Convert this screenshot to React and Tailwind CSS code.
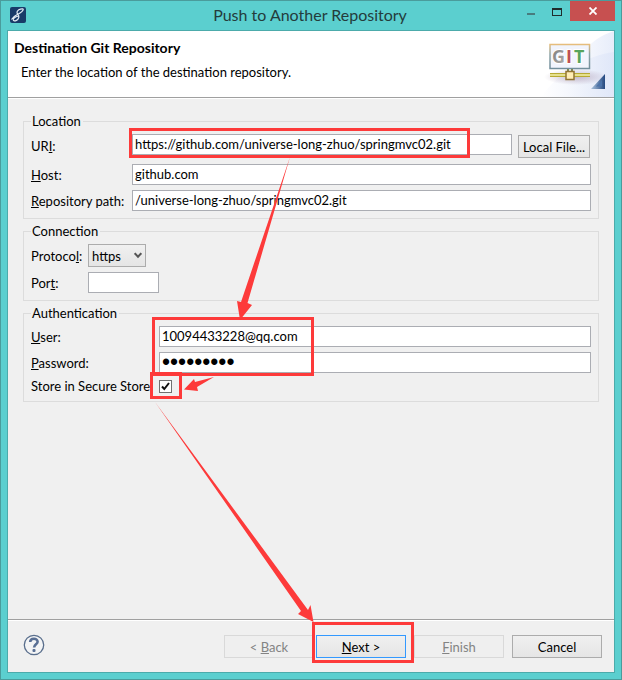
import React from "react";

const fieldBase =
  "h-[21px] min-w-0 rounded-none border border-[#abadb3] bg-white px-[2px] pb-px text-black outline-none";
const field = fieldBase + " text-[13px] leading-4";
const button =
  "h-[23px] shrink-0 whitespace-nowrap border text-center text-[13px] leading-4";
const raised = "border-[#acacac] bg-linear-to-b from-[#f0f0f0] to-[#e5e5e5]";

function Group({ title, children }) {
  return (
    <fieldset className="min-w-0 border border-[#dcdcdc] px-[7px] pt-[5px] pb-[7px]">
      <legend className="h-4 pr-[2px] pl-px text-[13px] leading-4">{title}</legend>
      {children}
    </fieldset>
  );
}

function Dialog() {
  return (
    <div className="flex min-h-screen flex-col border border-[#4a9c9c] bg-[#5bcfcf] px-[6px] pb-[6px]">
      <header className="-mr-[6px] flex h-[29px] items-start">
        <svg className="mt-[6px] ml-[3px] shrink-0" width="16" height="16" viewBox="0 0 16 16" aria-hidden="true">
          <rect width="16" height="16" rx="2" fill="#183a68" />
          <path d="M1.500 12.500C3.500 8.500 7 8 10 6C13 4 14 2 12.500 1.800C10.500 1.600 6.500 3.500 7 5.800C7.400 7.500 9.500 8 8.800 10.500C8 13.500 4 15 3.300 13C2.800 11 6 9.500 9 9" fill="none" stroke="#e4ecf4" strokeWidth="1.200" />
        </svg>
        <h1 className="flex-1 pt-[2px] pl-[76px] text-center text-base leading-6 text-[#243c3c]">Push to Another Repository</h1>
        <button type="button" aria-label="Minimize" className="flex h-5 w-[26px] items-center justify-center">
          <span className="mt-[6px] h-[2px] w-2 bg-[#487c7e]" />
        </button>
        <button type="button" aria-label="Maximize" className="flex h-5 w-[26px] items-center justify-center">
          <span className="mt-px h-2 w-[10px] border border-t-2 border-[#202c2c]" />
        </button>
        <button type="button" aria-label="Close" className="mr-[6px] flex h-5 w-[45px] items-center justify-center bg-[#c75050]">
          <svg width="8" height="8" viewBox="0 0 8 8">
            <path d="M.5 .5L7.500 7.500M7.500 .5L.5 7.500" stroke="#fff" strokeWidth="1.800" />
          </svg>
        </button>
      </header>

      <main className="flex flex-1 flex-col border border-[#4cabab] bg-[#f0f0f0]">
        <div className="flex h-[67px] justify-between border-b border-[#a0a0a0] bg-white">
          <div className="pt-2 pl-[6px]">
            <h2 className="text-sm leading-[18px] font-bold">Destination Git Repository</h2>
            <p className="mt-[6px] pl-[7px] text-[13px] leading-[18px]">Enter the location of the destination repository.</p>
          </div>
          <GitBanner />
        </div>
        <form className="flex flex-1 flex-col border-t border-white" onSubmit={(e) => e.preventDefault()}>
          <div className="flex flex-1 flex-col gap-1 px-[15px] pt-[14px]">
            <Group title="Location">
              <div className="flex">
                <label htmlFor="uri" className="w-[101px] shrink-0 whitespace-nowrap pt-1">UR<u>I</u>:</label>
                <input id="uri" className={field + " flex-1"} defaultValue="https://github.com/universe-long-zhuo/springmvc02.git" />
                <button type="button" className={button + " mt-px mr-px ml-[6px] w-[72px] " + raised}>Local File...</button>
              </div>
              <div className="mt-[6px] flex items-center">
                <label htmlFor="host" className="w-[101px] shrink-0 whitespace-nowrap"><u>H</u>ost:</label>
                <input id="host" className={field + " flex-1"} defaultValue="github.com" />
              </div>
              <div className="mt-[5px] flex items-center">
                <label htmlFor="path" className="w-[101px] shrink-0 whitespace-nowrap"><u>R</u>epository path:</label>
                <input id="path" className={field + " flex-1"} defaultValue="/universe-long-zhuo/springmvc02.git" />
              </div>
            </Group>
            <Group title="Connection">
              <div className="flex items-center">
                <label htmlFor="protocol" className="w-[57px] shrink-0">Protoco<u>l</u>:</label>
                <div className="grid">
                  <select id="protocol" className={"col-start-1 row-start-1 h-[23px] w-[58px] appearance-none border pl-[3px] text-[13px] leading-4 " + raised}>
                    <option>https</option>
                  </select>
                  <svg className="pointer-events-none col-start-1 row-start-1 mr-1 self-center justify-self-end" width="8" height="7" viewBox="0 0 8 7" aria-hidden="true">
                    <path d="M.7 1.200L4 4.700L7.300 1.200" fill="none" stroke="#555" strokeWidth="2" />
                  </svg>
                </div>
              </div>
              <div className="mt-[5px] flex items-center">
                <label htmlFor="port" className="w-[57px] shrink-0">Por<u>t</u>:</label>
                <input id="port" className={field + " w-[71px]"} />
              </div>
            </Group>
            <Group title="Authentication">
              <div className="flex items-center">
                <label htmlFor="user" className="w-32 shrink-0"><u>U</u>ser:</label>
                <input id="user" className={field + " flex-1"} defaultValue="10094433228@qq.com" />
              </div>
              <div className="mt-[5px] flex items-center">
                <label htmlFor="password" className="w-32 shrink-0"><u>P</u>assword:</label>
                <input id="password" type="password" className={fieldBase + " flex-1 font-['Liberation_Sans',sans-serif] text-[23px] leading-4"} defaultValue="secret123" />
              </div>
              <div className="mt-[5px] flex h-4 items-center">
                <label htmlFor="store" className="w-32 shrink-0 whitespace-nowrap">Store in Secure Store</label>
                <div className="grid">
                  <input id="store" type="checkbox" defaultChecked className="col-start-1 row-start-1 size-[13px] appearance-none border border-[#707070] bg-white" />
                  <svg className="pointer-events-none col-start-1 row-start-1" width="13" height="13" viewBox="0 0 13 13" aria-hidden="true">
                    <path d="M3 6.500L5.300 9L10 3" fill="none" stroke="#111" strokeWidth="2" />
                  </svg>
                </div>
              </div>
            </Group>
          </div>

          <footer className="flex h-[53px] border-t border-[#a0a0a0]">
            <div className="flex flex-1 border-t border-white pr-3 pl-[15px]">
              <button type="button" aria-label="Help" className="mt-[13px] mr-auto size-[22px]">
                <svg width="22" height="22" viewBox="0 0 22 22">
                  <circle cx="11" cy="11" r="9.700" fill="#f3f4f5" stroke="#596e8c" strokeWidth="1.300" />
                  <path d="M7.200 8.100C7.200 3.700 14.600 3.800 14.600 7.700C14.600 10.400 11.100 10.200 11.100 13.600" fill="none" stroke="#596f94" strokeWidth="2.600" />
                  <rect x="9.500" y="15" width="3" height="3" rx="1" fill="#596f94" />
                </svg>
              </button>
              <div className="mt-[14px] flex">
                <button type="button" disabled className={button + " w-[90px] border-[#d9d9d9] bg-[#efefef] text-[#838383]"}>&lt; <u>B</u>ack</button>
                <button type="submit" className={button + " ml-[2px] w-[90px] border-[#3399ff] bg-linear-to-b from-[#f0f0f0] to-[#e5e5e5]"}><u>N</u>ext &gt;</button>
                <button type="button" disabled className={button + " ml-2 w-[90px] border-[#d9d9d9] bg-[#efefef] text-[#838383]"}><u>F</u>inish</button>
                <button type="button" className={button + " ml-2 w-[90px] " + raised}>Cancel</button>
              </div>
            </div>
          </footer>
        </form>
      </main>
    </div>
  );
}

function GitBanner() {
  return (
    <svg className="shrink-0" width="75" height="66" viewBox="0 0 75 66" role="img" aria-label="Git">
      <defs>
        <linearGradient id="sky" x1="0" x2="1">
          <stop offset="0" stopColor="#fff" />
          <stop offset="1" stopColor="#dde5f8" />
        </linearGradient>
        <linearGradient id="frame" x1="0" y1="0" x2="0" y2="1">
          <stop offset="0" stopColor="#e6bd7c" />
          <stop offset=".4" stopColor="#8ea5a8" />
          <stop offset="1" stopColor="#728e9c" />
        </linearGradient>
        <linearGradient id="corner" x1="0" x2="1">
          <stop offset="0" stopColor="#a9c3df" />
          <stop offset="1" stopColor="#244880" />
        </linearGradient>
        <linearGradient id="silver" x1="0" y1="0" x2="1" y2="1">
          <stop offset="0" stopColor="#777" />
          <stop offset="1" stopColor="#b4b4b4" />
        </linearGradient>
        <radialGradient id="shade">
          <stop offset="0" stopColor="#b5a5bc" stopOpacity=".75" />
          <stop offset="1" stopColor="#b5a5bc" stopOpacity="0" />
        </radialGradient>
      </defs>
      <path d="M75 0C50 8 32 28 27 66H75Z" fill="url(#sky)" opacity=".7" />
      <path d="M75 21C50 24 20 40 2 66H75Z" fill="url(#sky)" opacity=".8" />
      <ellipse cx="37" cy="46" rx="32" ry="8" fill="url(#shade)" />
      <rect x="11" y="13.500" width="39.500" height="24" fill="#f1f4fd" stroke="url(#frame)" strokeWidth="1.500" />
      <g fontFamily="Open Sans, sans-serif" fontSize="18" fontWeight="700" stroke="#fff" strokeWidth="2" paintOrder="stroke">
        <text x="13" y="32" fill="url(#silver)">G</text>
        <text x="27" y="32" fill="#be5054">I</text>
        <text x="35" y="32" fill="#58a45d">T</text>
      </g>
      <path d="M11 42H51V46H11Z" fill="#b7aa35" />
      <path d="M11 44H51" stroke="#f5f2ac" strokeWidth="1.500" />
      <path d="M29 38V41M33 38V41" stroke="#7e8955" strokeWidth="2" />
      <rect x="27" y="40.500" width="8" height="8" fill="#ffedb5" stroke="#927431" strokeWidth="1.500" />
      <path d="M52 58H66V43Z" fill="url(#corner)" />
      <path d="M57 55.500H63V49Z" fill="#4b73aa" />
    </svg>
  );
}

function Annotations() {
  return (
    <svg className="pointer-events-none absolute top-0 left-0" width="622" height="680" viewBox="0 0 622 680" aria-hidden="true">
      <g fill="none" stroke="#fd3a3a" strokeWidth="3">
        <rect x="130.500" y="129.500" width="338" height="27" />
        <rect x="153.500" y="318.500" width="159" height="56" />
        <rect x="151.500" y="373.500" width="29" height="24" />
        <rect x="313.500" y="623.500" width="99" height="38" />
      </g>
      <g fill="#fd3a3a">
        <path d="M290 157L247.500 303L252 305L240 320L237 301L241 302Z" />
        <path d="M214 377L197 387L198 391L184 389.500L194 379L195 382Z" />
        <path d="M155 402L308 610L310.500 605L313.500 622L298 614L301 611Z" />
      </g>
    </svg>
  );
}

export default function App() {
  return (
    <div className="relative font-[Lato,sans-serif] text-[13px] leading-4 text-black">
      <Dialog />
      <Annotations />
    </div>
  );
}
